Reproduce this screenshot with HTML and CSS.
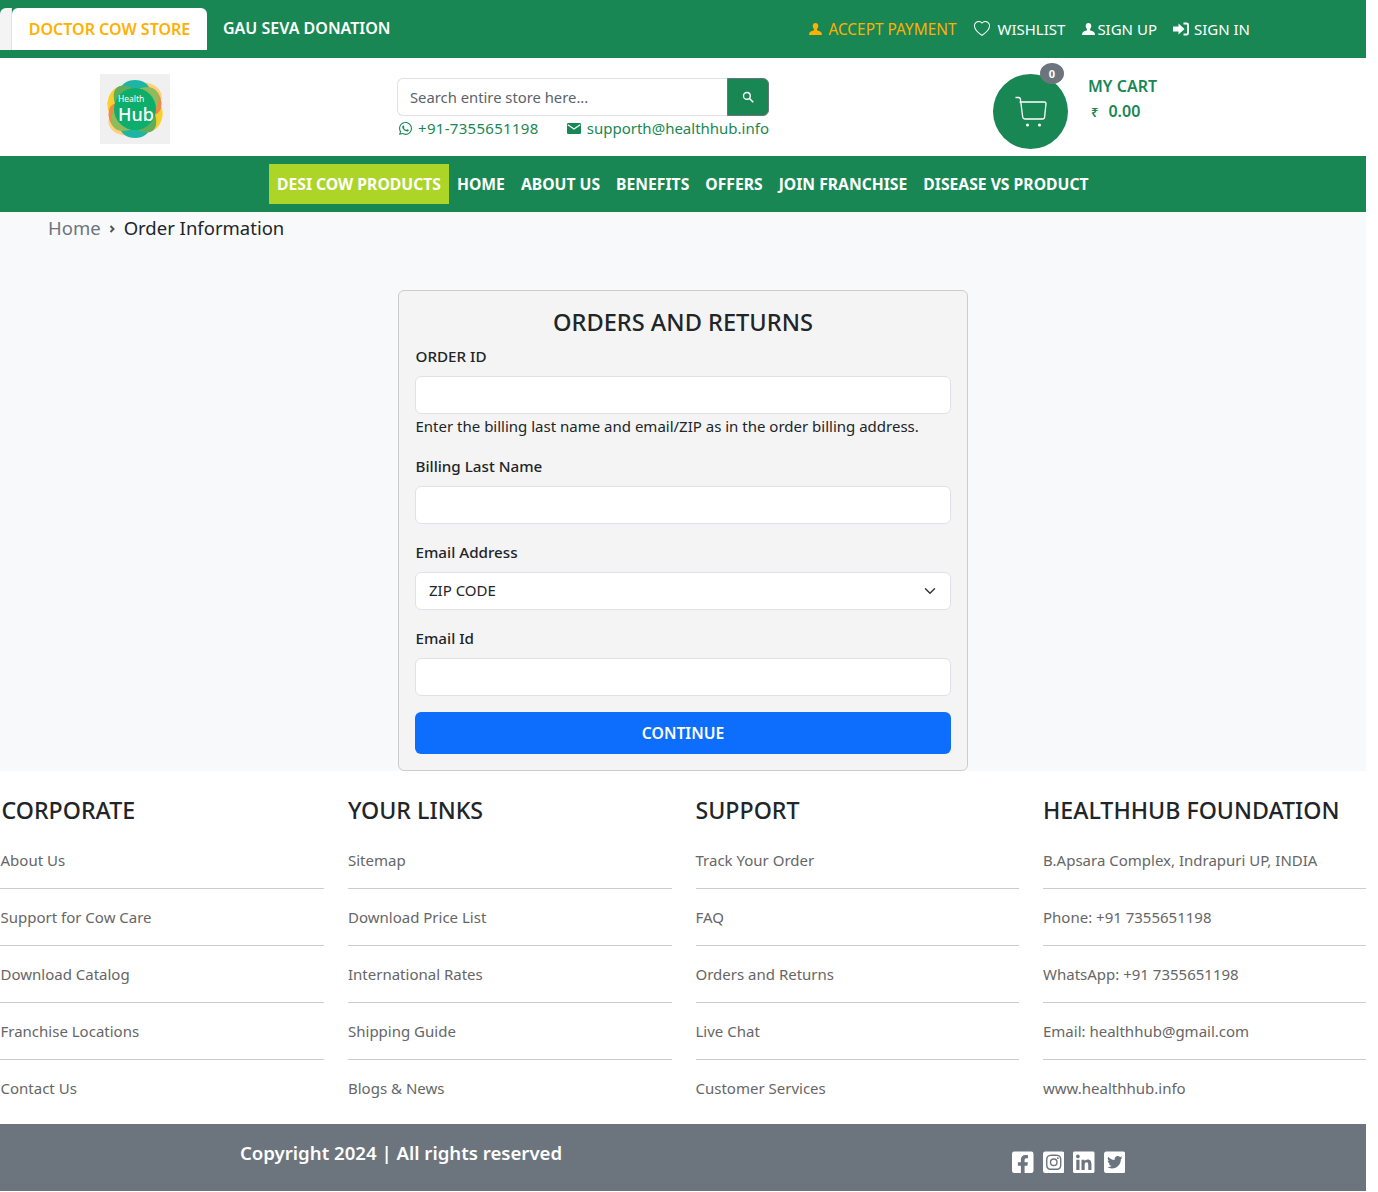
FILE: index.html
```html
<!DOCTYPE html>
<html>
<head>
<meta http-equiv="Content-Type" content="text/html; charset=utf-8"/>
<title>Orders and Returns</title>
<link rel="stylesheet" href="styles.css">
</head>
<body>
<div class="page">

<div class="topbar">
  <div class="tabs">
    <span class="tab-ghost"></span>
    <a class="tab-active">DOCTOR COW STORE</a>
    <a class="tab-link">GAU SEVA DONATION</a>
  </div>
  <div class="top-links">
    <a class="top-link accept">
      <svg class="ic-user" viewBox="0 0 16 16"><path fill="currentColor" d="M8 .5c2.100 0 3.400 1.500 3.400 3.700 0 1.600-.7 3-1.600 3.800v1.300c0 .5 4.700 1.400 5.700 3.600.3.7.4 1.600.4 2.600H.1c0-1 .1-1.900.4-2.600 1-2.200 5.700-3.100 5.700-3.600V8c-.9-.8-1.600-2.200-1.600-3.800C4.600 2 5.900.5 8 .5z"/></svg>
      <span>ACCEPT PAYMENT</span>
    </a>
    <a class="top-link">
      <svg class="ic-heart" viewBox="0 0 16 16"><path fill="currentColor" d="m8 2.748-.717-.737C5.600.281 2.514.878 1.400 3.053c-.523 1.023-.641 2.500.314 4.385.920 1.815 2.834 3.989 6.286 6.357 3.452-2.368 5.365-4.542 6.286-6.357.955-1.886.838-3.362.314-4.385C13.486.878 10.400.280 8.717 2.010L8 2.748zM8 15C-7.333 4.868 3.279-3.040 7.824 1.143c.060.055.119.112.176.171a3.120 3.120 0 0 1 .176-.170C12.720-3.042 23.333 4.867 8 15z"/></svg>
      <span>WISHLIST</span>
    </a>
    <a class="top-link tight">
      <svg class="ic-user" viewBox="0 0 16 16"><path fill="currentColor" d="M8 .5c2.100 0 3.400 1.500 3.400 3.700 0 1.600-.7 3-1.600 3.800v1.300c0 .5 4.700 1.400 5.700 3.600.3.7.4 1.600.4 2.600H.1c0-1 .1-1.900.4-2.600 1-2.200 5.700-3.100 5.700-3.600V8c-.9-.8-1.600-2.200-1.600-3.800C4.600 2 5.900.5 8 .5z"/></svg>
      <span>SIGN UP</span>
    </a>
    <a class="top-link signin">
      <svg class="ic-signin" viewBox="0 0 16 14"><path fill="currentColor" d="M0 4.500h5.500V1.500L11.500 7l-6 5.500v-3H0z"/><path fill="none" stroke="currentColor" stroke-width="1.800" d="M10.500 1.500h2.800c.9 0 1.700.7 1.700 1.500v8c0 .8-.8 1.500-1.700 1.500h-2.800"/></svg>
      <span>SIGN IN</span>
    </a>
  </div>
</div>

<div class="header">
  <div class="logo">
    <svg viewBox="0 0 70 70">
      <ellipse cx="18" cy="27" rx="10" ry="15" fill="#f9cf2b" transform="rotate(20 18 27)"/>
      <ellipse cx="52" cy="43" rx="10" ry="15" fill="#f9cf2b" transform="rotate(20 52 43)"/>
      <ellipse cx="47" cy="20" rx="15" ry="11" fill="#fbd17c" transform="rotate(20 47 20)"/>
      <ellipse cx="23" cy="50" rx="15" ry="11" fill="#fbd17c" transform="rotate(20 23 50)"/>
      <ellipse cx="35" cy="17" rx="15" ry="11" fill="#1fb5a4"/>
      <ellipse cx="35" cy="53" rx="15" ry="11" fill="#1fb5a4"/>
      <ellipse cx="51" cy="27" rx="10" ry="14" fill="#ef8a45" transform="rotate(-20 51 27)"/>
      <ellipse cx="19" cy="43" rx="10" ry="14" fill="#ef8a45" transform="rotate(-20 19 43)"/>
      <ellipse cx="35" cy="35" rx="28" ry="16" fill="#8fbc5a" transform="rotate(-40 35 35)"/>
      <ellipse cx="35" cy="35" rx="28" ry="15" fill="#5fae5c" transform="rotate(50 35 35)"/>
      <circle cx="35" cy="35" r="21" fill="#0dad6b"/>
    </svg>
    <span class="logo-small">Health</span>
    <span class="logo-big">Hub</span>
  </div>

  <div class="search-col">
    <div class="search">
      <span class="search-input">Search entire store here...</span>
      <span class="search-btn">
        <svg viewBox="0 0 16 16"><circle cx="6.500" cy="6.500" r="4.500" fill="none" stroke="#fff" stroke-width="1.800"/><path d="M10 10l5 5" stroke="#fff" stroke-width="2.200"/></svg>
      </span>
    </div>
    <div class="contact">
      <span class="contact-item phone">
        <svg class="ic-wa" viewBox="0 0 448 512"><path fill="currentColor" d="M380.900 97.100C339 55.100 283.200 32 223.900 32c-122.400 0-222 99.600-222 222 0 39.100 10.200 77.300 29.600 111L0 480l117.700-30.900c32.400 17.700 68.900 27 106.100 27h.1c122.300 0 224.100-99.600 224.100-222 0-59.300-25.200-115-67.100-157zm-157 341.600c-33.200 0-65.700-8.900-94-25.700l-6.700-4-69.800 18.300L72 359.200l-4.400-7c-18.500-29.400-28.200-63.300-28.200-98.200 0-101.700 82.800-184.500 184.600-184.500 49.300 0 95.600 19.200 130.400 54.100 34.800 34.900 56.200 81.200 56.100 130.500 0 101.800-84.900 184.600-186.600 184.600zm101.200-138.200c-5.500-2.800-32.800-16.200-37.900-18-5.100-1.900-8.800-2.800-12.500 2.800-3.700 5.600-14.300 18-17.600 21.800-3.200 3.700-6.500 4.200-12 1.400-32.600-16.300-54-29.100-75.500-66-5.700-9.800 5.700-9.100 16.300-30.300 1.800-3.700.9-6.900-.5-9.700-1.400-2.800-12.500-30.100-17.100-41.200-4.500-10.800-9.100-9.300-12.500-9.500-3.200-.2-6.900-.2-10.600-.2-3.700 0-9.700 1.400-14.800 6.900-5.100 5.600-19.400 19-19.400 46.300 0 27.300 19.900 53.700 22.600 57.400 2.800 3.700 39.100 59.700 94.800 83.800 35.200 15.200 49 16.500 66.600 13.900 10.700-1.600 32.800-13.400 37.400-26.400 4.600-13 4.600-24.100 3.200-26.400-1.300-2.500-5-3.900-10.500-6.600z"/></svg>
        +91-7355651198
      </span>
      <span class="contact-item">
        <svg class="ic-mail" viewBox="0 0 14 11"><rect width="14" height="11" rx="1.200" fill="currentColor"/><path d="M.8 1.800L7 6l6.200-4.200" fill="none" stroke="#fff" stroke-width="1.100"/></svg>
        supporth@healthhub.info
      </span>
    </div>
  </div>

  <div class="cart">
    <div class="cart-circle">
      <svg viewBox="0 0 34 34"><path d="M1.500 2.500h3.200c1 0 1.500.5 1.700 1.500l2.300 18c.2 1.200 1 2 2.200 2h17.600c1.200 0 2-.8 2.100-2L32 8.500c0-1-.5-1.500-1.500-1.500H5.500" fill="none" stroke="#fff" stroke-width="1.300"/><circle cx="13.500" cy="30" r="1.500" fill="#fff"/><circle cx="25.500" cy="30" r="1.500" fill="#fff"/></svg>
      <span class="cart-badge">0</span>
    </div>
    <div class="cart-text">
      <div class="cart-title">MY CART</div>
      <div class="cart-total"><span class="rupee">₹</span>0.00</div>
    </div>
  </div>
</div>

<div class="nav">
  <a class="nav-item nav-active">DESI COW PRODUCTS</a>
  <a class="nav-item">HOME</a>
  <a class="nav-item">ABOUT US</a>
  <a class="nav-item">BENEFITS</a>
  <a class="nav-item">OFFERS</a>
  <a class="nav-item">JOIN FRANCHISE</a>
  <a class="nav-item">DISEASE VS PRODUCT</a>
</div>

<div class="main">
  <div class="crumbs">
    <a class="crumb-home">Home</a>
    <svg class="crumb-sep" viewBox="0 0 6 8"><path d="M1.500 1l3 3-3 3" fill="none" stroke="#555" stroke-width="2"/></svg>
    <span>Order Information</span>
  </div>

  <div class="card">
    <h2 class="card-title">ORDERS AND RETURNS</h2>
    <label class="lbl">ORDER ID</label>
    <div class="field"></div>
    <p class="hint">Enter the billing last name and email/ZIP as in the order billing address.</p>
    <label class="lbl lbl-gap">Billing Last Name</label>
    <div class="field"></div>
    <label class="lbl lbl-gap">Email Address</label>
    <div class="field field-select">
      <span>ZIP CODE</span>
      <svg viewBox="0 0 16 16"><path d="M2 5l6 6 6-6" fill="none" stroke="#343a40" stroke-width="2" stroke-linecap="round" stroke-linejoin="round"/></svg>
    </div>
    <label class="lbl lbl-gap">Email Id</label>
    <div class="field"></div>
    <a class="btn-continue">CONTINUE</a>
  </div>
</div>

<div class="footer">
  <div class="foot-col foot-col-first">
    <h3>CORPORATE</h3>
    <a>About Us</a>
    <a>Support for Cow Care</a>
    <a>Download Catalog</a>
    <a>Franchise Locations</a>
    <a>Contact Us</a>
  </div>
  <div class="foot-col">
    <h3>YOUR LINKS</h3>
    <a>Sitemap</a>
    <a>Download Price List</a>
    <a>International Rates</a>
    <a>Shipping Guide</a>
    <a>Blogs &amp; News</a>
  </div>
  <div class="foot-col">
    <h3>SUPPORT</h3>
    <a>Track Your Order</a>
    <a>FAQ</a>
    <a>Orders and Returns</a>
    <a>Live Chat</a>
    <a>Customer Services</a>
  </div>
  <div class="foot-col">
    <h3>HEALTHHUB FOUNDATION</h3>
    <a>B.Apsara Complex, Indrapuri UP, INDIA</a>
    <a>Phone: +91 7355651198</a>
    <a>WhatsApp: +91 7355651198</a>
    <a>Email: healthhub@gmail.com</a>
    <a>www.healthhub.info</a>
  </div>
</div>

<div class="copybar">
  <div class="copy">Copyright 2024 | All rights reserved</div>
  <div class="social">
    <svg viewBox="0 0 448 512"><path fill="#fff" d="M400 32H48A48 48 0 0 0 0 80v352a48 48 0 0 0 48 48h137.250V327.690h-63V256h63v-54.640c0-62.150 37-96.480 93.670-96.480 27.140 0 55.520 4.840 55.520 4.840v61h-31.270c-30.810 0-40.420 19.120-40.420 38.730V256h68.780l-11 71.690h-57.780V480H400a48 48 0 0 0 48-48V80a48 48 0 0 0-48-48z"/></svg>
    <svg viewBox="0 0 448 512"><path fill="#fff" d="M224,202.660A53.340,53.340,0,1,0,277.360,256,53.380,53.380,0,0,0,224,202.660Zm124.710-41a54,54,0,0,0-30.410-30.410c-21-8.290-71-6.430-94.300-6.430s-73.250-1.930-94.310,6.430a54,54,0,0,0-30.410,30.410c-8.280,21-6.430,71.050-6.430,94.330S91,329.260,99.320,350.330a54,54,0,0,0,30.410,30.410c21,8.290,71,6.430,94.310,6.430s73.240,1.930,94.300-6.430a54,54,0,0,0,30.410-30.410c8.350-21,6.430-71.050,6.430-94.330S357.100,182.740,348.750,161.670ZM224,338a82,82,0,1,1,82-82A81.900,81.900,0,0,1,224,338Zm85.380-148.300a19.140,19.140,0,1,1,19.130-19.140A19.100,19.100,0,0,1,309.420,189.740ZM400,32H48A48,48,0,0,0,0,80V432a48,48,0,0,0,48,48H400a48,48,0,0,0,48-48V80A48,48,0,0,0,400,32ZM382.880,322c-1.290,25.630-7.140,48.340-25.850,67s-41.400,24.630-67,25.850c-26.410,1.490-105.590,1.490-132,0-25.630-1.290-48.260-7.150-67-25.850s-24.630-41.420-25.850-67c-1.490-26.420-1.490-105.610,0-132,1.290-25.630,7.070-48.340,25.850-67s41.470-24.560,67-25.780c26.410-1.490,105.590-1.490,132,0,25.630,1.290,48.330,7.150,67,25.850s24.630,41.420,25.850,67.050C384.370,216.440,384.370,295.560,382.880,322Z"/></svg>
    <svg viewBox="0 0 448 512"><path fill="#fff" d="M416 32H31.900C14.300 32 0 46.500 0 64.300v383.400C0 465.500 14.300 480 31.900 480H416c17.600 0 32-14.500 32-32.300V64.300c0-17.800-14.400-32.300-32-32.300zM135.400 416H69V202.200h66.500V416zm-33.200-243c-21.300 0-38.500-17.300-38.500-38.500S80.900 96 102.200 96c21.200 0 38.500 17.300 38.500 38.500 0 21.300-17.200 38.500-38.500 38.500zm282.100 243h-66.400V312c0-24.800-.5-56.700-34.500-56.700-34.600 0-39.900 27-39.900 54.900V416h-66.400V202.200h63.700v29.200h.9c8.900-16.800 30.600-34.500 62.900-34.500 67.200 0 79.700 44.300 79.700 101.900V416z"/></svg>
    <svg viewBox="0 0 448 512"><path fill="#fff" d="M400 32H48C21.500 32 0 53.500 0 80v352c0 26.500 21.500 48 48 48h352c26.500 0 48-21.500 48-48V80c0-26.500-21.500-48-48-48zm-48.900 158.800c.2 2.800.2 5.700.2 8.500 0 86.700-66 186.600-186.600 186.600-37.200 0-71.700-10.800-100.700-29.400 5.300.6 10.400.8 15.800.8 30.700 0 58.900-10.400 81.400-28-28.800-.6-53-19.500-61.300-45.500 10.100 1.500 19.200 1.500 29.600-1.200-30-6.100-52.500-32.500-52.500-64.400v-.8c8.700 4.900 18.900 7.900 29.600 8.300a65.447 65.447 0 0 1-29.200-54.600c0-12.200 3.200-23.400 8.900-33.100 32.300 39.800 80.800 65.800 135.200 68.600-9.300-44.500 24-80.600 64-80.600 18.900 0 35.900 7.900 47.900 20.700 14.800-2.800 29-8.300 41.600-15.800-4.900 15.200-15.100 28-28.600 36 13.100-1.400 25.800-5 37.600-10.100-8.900 13.100-20.100 24.700-32.900 34z"/></svg>
  </div>
</div>

</div>
</body>
</html>
```

FILE: styles.css
```css
body {
  margin: 0;
  background-color: white;
  font-family: "Noto Sans", sans-serif;
  font-size: 15px;
  color: #212529;
}

.page {
  width: 1366px;
  overflow: hidden;
}

/* top bar */
.topbar {
  height: 58px;
  background-color: #198754;
  display: flex;
  justify-content: space-between;
  padding-right: 116px;
  box-sizing: border-box;
}

.tabs {
  display: flex;
  align-items: flex-start;
  padding-top: 8px;
}

.tab-ghost {
  width: 12px;
  height: 42px;
  box-sizing: border-box;
  background-color: #f4f4f4;
  border-right: 1px solid #dee2e6;
  border-top-left-radius: 6px;
}

.tab-active {
  width: 195px;
  height: 42px;
  background-color: white;
  border-top-right-radius: 6px;
  border-top-left-radius: 6px;
  color: #ffb000;
  font-size: 16px;
  font-weight: 600;
  line-height: 42px;
  text-align: center;
}

.tab-link {
  margin-left: 16px;
  color: white;
  font-size: 16px;
  font-weight: 600;
  line-height: 41px;
}

.top-links {
  display: flex;
  align-items: center;
  gap: 17px;
  color: white;
  font-size: 15px;
}

.top-link {
  display: flex;
  align-items: center;
  gap: 7px;
}

.top-link.tight {
  gap: 2px;
}

.top-link.signin {
  gap: 5px;
  margin-left: -1px;
}

.accept {
  gap: 6px;
  margin-right: 1px;
  color: #ffb000;
  font-size: 15.4px;
}

.ic-user {
  width: 13px;
  height: 14px;
}

.ic-heart {
  width: 16px;
  height: 16px;
}

.ic-signin {
  width: 16px;
  height: 14px;
}

/* logo, search, cart */
.header {
  height: 98px;
  display: flex;
  align-items: flex-start;
}

.logo {
  position: relative;
  width: 70px;
  height: 70px;
  margin: 16px 0 0 100px;
  background-color: #f0f0f0;
  color: white;
}

.logo svg {
  display: block;
  width: 70px;
  height: 70px;
}

.logo-small {
  position: absolute;
  left: 18px;
  top: 21px;
  font-size: 8.5px;
  line-height: 8px;
}

.logo-big {
  position: absolute;
  left: 18px;
  top: 32px;
  font-size: 18px;
  font-weight: 500;
  line-height: 16px;
}

.search-col {
  width: 372px;
  margin: 20px 0 0 227px;
}

.search {
  height: 38px;
  display: flex;
}

.search-input {
  flex: 1;
  padding-left: 12px;
  box-sizing: border-box;
  border: 1px solid #dee2e6;
  border-right: none;
  border-radius: 6px 0 0 6px;
  font-size: 14.8px;
  line-height: 36px;
  color: #5c636a;
}

.search-btn {
  width: 42px;
  display: flex;
  align-items: center;
  justify-content: center;
  background-color: #198754;
  border: 1px solid #6c757d;
  border-radius: 0 6px 6px 0;
  box-sizing: border-box;
}

.search-btn svg {
  width: 12px;
  height: 12px;
}

.contact {
  display: flex;
  justify-content: space-between;
  align-items: center;
  margin-top: 2px;
  padding-left: 2px;
  color: #198754;
  line-height: 20px;
}

.contact-item {
  display: flex;
  align-items: center;
  gap: 6px;
}

.phone {
  letter-spacing: 0.3px;
}

.ic-wa {
  width: 13px;
  height: 15px;
}

.ic-mail {
  width: 14px;
  height: 11px;
}

.cart {
  display: flex;
  margin: 16px 0 0 224px;
}

.cart-circle {
  position: relative;
  width: 75px;
  height: 75px;
  border-radius: 50%;
  background-color: #198754;
  display: flex;
  align-items: center;
  justify-content: center;
}

.cart-circle svg {
  width: 34px;
  height: 34px;
}

.cart-badge {
  position: absolute;
  top: -11px;
  right: 4px;
  width: 24px;
  height: 21px;
  border-radius: 50%;
  background-color: #6c757d;
  color: white;
  font-size: 11px;
  font-weight: 700;
  line-height: 21px;
  text-align: center;
}

.cart-text {
  margin: 0 0 0 20px;
  color: #198754;
  font-size: 16px;
  font-weight: 600;
}

.cart-title {
  line-height: 24px;
}

.cart-total {
  line-height: 26px;
}

.rupee {
  margin: 0 10px 0 3px;
  font-size: 13px;
}

/* main nav */
.nav {
  height: 56px;
  background-color: #198754;
  display: flex;
  align-items: center;
  padding-left: 269px;
  color: white;
  font-size: 15.7px;
  font-weight: 700;
}

.nav-item {
  padding: 0 8px;
  line-height: 40px;
}

.nav-active {
  background-color: #add527;
}

/* breadcrumb and form card */
.main {
  height: 559px;
  background-color: #f8f9fa;
}

.crumbs {
  display: flex;
  align-items: center;
  padding-left: 48px;
  font-size: 18.5px;
  line-height: 31px;
}

.crumb-home {
  color: #6c757d;
}

.crumb-sep {
  width: 6px;
  height: 8px;
  margin: 3px 9px 0 8px;
}

.card {
  width: 570px;
  height: 481px;
  margin: 47px 0 0 398px;
  padding: 13px 16px 0;
  box-sizing: border-box;
  background-color: #f4f4f4;
  border: 1px solid #ccc;
  border-radius: 6px;
}

.card-title {
  margin: 0;
  font-size: 23.6px;
  font-weight: 500;
  line-height: 36px;
  text-align: center;
}

.lbl {
  display: block;
  margin-top: 4px;
  padding-left: 0.5px;
  font-size: 15.2px;
  font-weight: 500;
  line-height: 24px;
}

.lbl-gap {
  margin-top: 16px;
}

.field {
  height: 38px;
  margin-top: 8px;
  box-sizing: border-box;
  background-color: white;
  border: 1px solid #dee2e6;
  border-radius: 6px;
}

.field-select {
  display: flex;
  align-items: center;
  justify-content: space-between;
  padding: 0 14px 2px 13px;
}

.field-select svg {
  width: 12px;
  height: 12px;
  margin-top: 2px;
}

.hint {
  margin: 0;
  padding-left: 0.5px;
  line-height: 24px;
}

.btn-continue {
  display: block;
  height: 42px;
  margin-top: 16px;
  background-color: #0d6efd;
  border-radius: 6px;
  color: white;
  font-size: 15.75px;
  font-weight: 600;
  line-height: 42px;
  text-align: center;
}

/* footer */
.footer {
  height: 353px;
  display: grid;
  grid-template-columns: repeat(4, 323.5px);
  gap: 24px;
  padding-left: 0.5px;
  background-color: white;
}

.foot-col h3 {
  margin: 21px 0 0;
  font-size: 23.2px;
  font-weight: 500;
  line-height: 36px;
}

.foot-col a {
  display: block;
  height: 56px;
  border-bottom: 1px solid #ccc;
  color: #666;
  font-size: 15px;
  line-height: 56px;
}

.foot-col h3 + a {
  margin-top: 4px;
}

.foot-col a:last-child {
  border-bottom: none;
}

.foot-col-first {
  margin-left: -1px;
}

.foot-col-first h3 {
  padding-left: 2px;
}

.foot-col-first a {
  padding-left: 1px;
}

.copybar {
  height: 67px;
  background-color: #6c757d;
  display: flex;
  color: white;
}

.copy {
  margin-left: 240px;
  font-size: 18.6px;
  font-weight: 600;
  line-height: 58px;
}

.social {
  display: flex;
  gap: 9px;
  margin: 25.5px 0 0 auto;
  padding-right: 241px;
}

.social svg {
  width: 21.5px;
  height: 24.6px;
  display: block;
}
```
